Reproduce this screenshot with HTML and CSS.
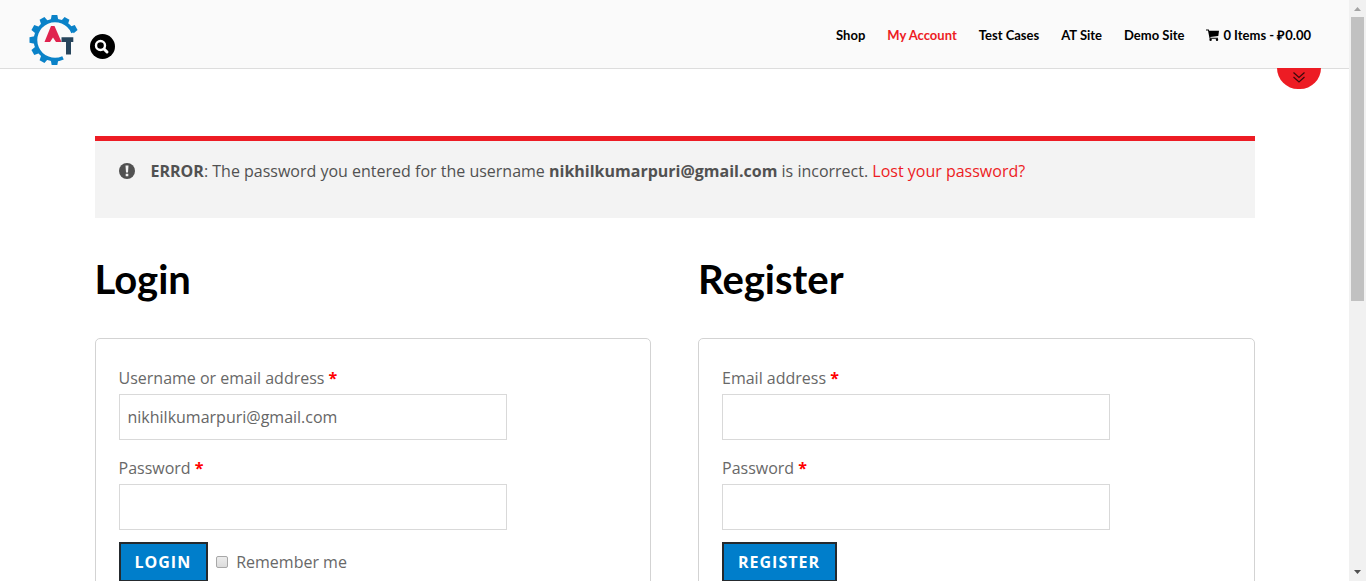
FILE: index.html
```html
<!DOCTYPE html>
<html lang="en">
<head>
<meta charset="utf-8">
<title>My Account</title>
<meta name="viewport" content="width=device-width, initial-scale=1">
<link rel="stylesheet" href="styles.css">
</head>
<body>
<div class="page">
  <header class="header">
    <div class="brand">
      <a class="logo" href="#" aria-label="Home">
        <svg width="50" height="52" viewBox="0 0 50 52">
          <path d="M45 18.500A19.500 19.500 0 1 0 35 43.800" fill="none" stroke="#0a82c8" stroke-width="3.600"/>
          <g fill="#0a82c8">
            <path d="M22.700 6L23.700 1h5.600l1 5z"/>
            <path d="M22.700 6L23.700 1h5.600l1 5z" transform="rotate(30 26.500 26)"/>
            <path d="M22.700 6L23.700 1h5.600l1 5z" transform="rotate(60 26.500 26)"/>
            <path d="M22.700 6L23.700 1h5.600l1 5z" transform="rotate(180 26.500 26)"/>
            <path d="M22.700 6L23.700 1h5.600l1 5z" transform="rotate(210 26.500 26)"/>
            <path d="M22.700 6L23.700 1h5.600l1 5z" transform="rotate(240 26.500 26)"/>
            <path d="M22.700 6L23.700 1h5.600l1 5z" transform="rotate(270 26.500 26)"/>
            <path d="M22.700 6L23.700 1h5.600l1 5z" transform="rotate(300 26.500 26)"/>
            <path d="M22.700 6L23.700 1h5.600l1 5z" transform="rotate(330 26.500 26)"/>
          </g>
          <path d="M16.500 28L23 12h3.500L33.500 28h-5.500l-3-4.500-3 4.500z" fill="#e0234e"/>
          <path d="M33.500 23.300H45.300v4.700H43V40.500h-5V28h-4.500z" fill="#27455c"/>
        </svg>
      </a>
      <button class="search" type="button" aria-label="Search">
        <svg width="25" height="25" viewBox="0 0 25 25" fill="none" stroke="#fff">
          <circle cx="10.500" cy="11.500" r="4.500" stroke-width="2.400"/>
          <path d="M14 15l3 3" stroke-width="3" stroke-linecap="round"/>
        </svg>
      </button>
    </div>
    <nav class="nav">
      <a href="#">Shop</a>
      <a class="current" href="#">My Account</a>
      <a href="#">Test Cases</a>
      <a href="#">AT Site</a>
      <a href="#">Demo Site</a>
      <a class="cart" href="#">
        <svg width="13" height="12" viewBox="0 0 13 12">
          <path d="M0 .5h2.800l.4 1.300H13L12.300 7l-8 .9.2.8h7.500v1H3.600L2 1.600H0z"/>
          <circle cx="4.600" cy="10.700" r="1.200"/><circle cx="11" cy="10.700" r="1.200"/>
        </svg>
        <span>0 Items - ₽0.00</span>
      </a>
    </nav>
    <button class="toggle" type="button" aria-label="Show more">
      <svg width="12" height="11" viewBox="0 0 12 11" fill="none" stroke="#3a0a0c" stroke-width="1.200"><path d="M.5 .5L6 5.500 11.500 .5M.5 5L6 10l5.500-5"/></svg>
    </button>
  </header>
  <main class="content">
    <div class="error" role="alert">
      <svg class="error-icon" width="16" height="16" viewBox="0 0 16 16">
        <circle cx="8" cy="8" r="8" fill="#515151"/>
        <path d="M6.500 2.500h3L9 9.500H7zM6.700 10.800h2.600v2.500H6.700z" fill="#f3f3f3"/>
      </svg>
      <p><strong>ERROR</strong>: The password you entered for the username <strong>nikhilkumarpuri@gmail.com</strong> is incorrect. <a href="#">Lost your password?</a></p>
    </div>
    <div class="columns">
      <section>
        <h2>Login</h2>
        <form class="card">
          <div class="field">
            <label for="user">Username or email address <b>*</b></label>
            <input id="user" type="text" value="nikhilkumarpuri@gmail.com">
          </div>
          <div class="field">
            <label for="pass">Password <b>*</b></label>
            <input id="pass" type="password">
          </div>
          <div class="actions">
            <button class="submit" type="button">LOGIN</button>
            <input class="check" id="remember" type="checkbox">
            <label for="remember">Remember me</label>
          </div>
        </form>
      </section>
      <section>
        <h2>Register</h2>
        <form class="card">
          <div class="field">
            <label for="reg-email">Email address <b>*</b></label>
            <input id="reg-email" type="email">
          </div>
          <div class="field">
            <label for="reg-pass">Password <b>*</b></label>
            <input id="reg-pass" type="password">
          </div>
          <div class="actions">
            <button class="submit" type="button">REGISTER</button>
          </div>
        </form>
      </section>
    </div>
  </main>
</div>
<div class="scrollbar" aria-hidden="true">
  <svg width="17" height="17" viewBox="0 0 17 17"><path d="M5 11l3.500-4 3.500 4z" fill="#a3a3a3"/></svg>
  <div class="track"><div class="thumb"></div></div>
  <svg width="17" height="17" viewBox="0 0 17 17"><path d="M5 6h7l-3.500 4z" fill="#505050"/></svg>
</div>
</body>
</html>
```
FILE: styles.css
```css
* { box-sizing: border-box; }

body {
  margin: 0;
  height: 100vh;
  overflow: hidden;
  display: grid;
  grid-template-columns: 1fr 17px;
  background: #fff;
  color: #515151;
  font: 16px/30px "Open Sans", "Noto Sans", sans-serif;
}

.page { min-width: 0; height: 100vh; overflow: hidden; }

.header {
  position: relative;
  display: flex;
  justify-content: space-between;
  align-items: flex-start;
  height: 69px;
  padding: 0 38px 0 28px;
  background: #fafafa;
  border-bottom: 1px solid #ddd;
}

.brand { display: flex; align-items: flex-start; gap: 12px; padding-top: 14px; }
.logo { display: block; height: 52px; }
.logo svg, .search svg { display: block; }

.search {
  width: 25px;
  height: 25px;
  margin-top: 20px;
  padding: 0;
  border: 0;
  border-radius: 50%;
  background: #000;
}

.nav {
  display: flex;
  gap: 22px;
  padding-top: 25px;
  font: 700 13px/20px Lato, "Open Sans", sans-serif;
  white-space: nowrap;
}
.nav a { color: #000; text-decoration: none; }
.nav .current { color: #ed1c24; }
.nav .cart { display: flex; align-items: center; gap: 4px; }

.toggle {
  position: absolute;
  top: 100%;
  right: 28px;
  display: grid;
  place-items: center;
  width: 44px;
  height: 21px;
  padding: 0 0 2px;
  border: 0;
  border-radius: 0 0 22px 22px;
  background: #ed1c24;
}

.content { max-width: 1160px; margin: 0 auto; padding-top: 67px; }

.error {
  display: flex;
  gap: 16px;
  min-height: 82px;
  padding: 15px 24px;
  border-top: 5px solid #ed1c24;
  background: #f3f3f3;
}
.error-icon { flex: none; margin-top: 7px; }
.error p { margin: 0; }
.error a { color: #ed1c24; text-decoration: none; }

.columns {
  display: grid;
  grid-template-columns: 1fr 1fr;
  gap: 47px;
  padding-top: 36px;
}

h2 {
  margin: 0 0 34px;
  color: #000;
  font: 700 40px/50px Lato, "Open Sans", sans-serif;
}

.card {
  padding: 23px;
  border: 1px solid #d3d3d3;
  border-radius: 5px;
  color: #686868;
}

.field { margin-bottom: 12px; }
.field label { display: block; line-height: 32px; }
.field b { color: #f00; }
.field input {
  display: block;
  width: 100%;
  max-width: 388px;
  height: 46px;
  padding: 0 8px;
  border: 1px solid #d9d9d9;
  background: #fff;
  color: #666;
  font: inherit;
}

.actions { display: flex; align-items: center; gap: 8px; }

.submit {
  height: 40px;
  padding: 0 15px 0 14px;
  border: 2px solid #252a2e;
  background: #007ecb;
  color: #fff;
  font: 700 16px/36px "Open Sans", sans-serif;
  letter-spacing: 1px;
}

.check {
  appearance: none;
  width: 12px;
  height: 12px;
  margin: 0;
  border: 1px solid #a8a8a8;
  border-radius: 2px;
  background: linear-gradient(#ececec, #dcdcdc);
}

.scrollbar {
  display: flex;
  flex-direction: column;
  height: 100vh;
  background: #f1f1f1;
}
.scrollbar svg { display: block; }
.track { flex: 1; padding: 0 2px; }
.thumb { height: 52%; background: #c1c1c1; }
```
